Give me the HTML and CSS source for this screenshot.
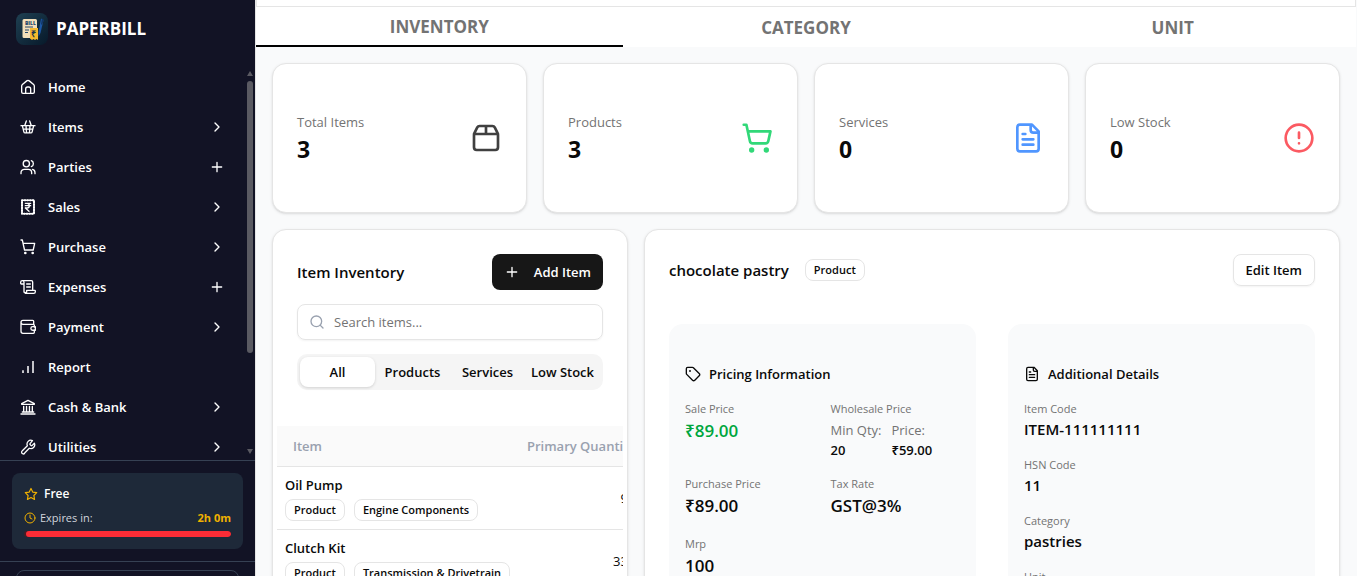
FILE: index.html
```html
<!DOCTYPE html>
<html lang="en">
<head>
<meta charset="utf-8">
<meta name="viewport" content="width=device-width, initial-scale=1">
<title>Paperbill</title>
<link rel="stylesheet" href="styles.css">
</head>
<body>
<svg class="sprite" aria-hidden="true">
  <symbol id="chevron" viewBox="0 0 24 24"><path d="m9 18 6-6-6-6"/></symbol>
  <symbol id="plus" viewBox="0 0 24 24"><path d="M5 12h14M12 5v14"/></symbol>
  <symbol id="home" viewBox="0 0 24 24"><path d="M2.500 10.500a3 3 0 0 1 1.100-2.300l6.500-5.400a3 3 0 0 1 3.800 0l6.500 5.400a3 3 0 0 1 1.100 2.300V19.500a2 2 0 0 1-2 2h-3.500v-6.500a3 3 0 0 0-3-3h-1.500a3 3 0 0 0-3 3v6.500H4.500a2 2 0 0 1-2-2z"/><path d="M8 21.500h8"/></symbol>
  <symbol id="basket" viewBox="0 0 24 24"><path d="M1.500 10h21M3.500 10l2.300 9.200a2 2 0 0 0 2 1.600h8.400a2 2 0 0 0 2-1.600L20.500 10M7 10l2.500-7M17 10l-2.500-7M5 15.300h14M9 10l.8 10.500M15 10l-.8 10.500"/></symbol>
  <symbol id="users" viewBox="0 0 24 24"><circle cx="9.500" cy="7" r="4.700"/><path d="M1.500 22v-1.500a5 5 0 0 1 5-5h6a5 5 0 0 1 5 5V22M17 2.600a4.700 4.700 0 0 1 0 8.800M22.500 22v-1.500a5 5 0 0 0-3.700-4.800"/></symbol>
  <symbol id="receipt" viewBox="0 0 24 24"><path d="M3 2h18v20H3z"/><path class="dots" d="M3 2h18v20H3z"/><path d="M8 6.500h8M8 10h8M8 13.500h2.500a3.500 3.500 0 0 0 0-7M8 13.500l5.500 5"/></symbol>
  <symbol id="cart" viewBox="0 0 24 24"><circle class="fill" cx="8" cy="21" r="1"/><circle class="fill" cx="19" cy="21" r="1"/><path d="M1.500 1.500h2l3.300 15h13l2.200-10H4.700"/></symbol>
  <symbol id="cart-lg" viewBox="0 0 24 24"><circle class="fill" cx="8" cy="21" r="1"/><circle class="fill" cx="19" cy="21" r="1"/><path d="M2.050 2.050h2l2.660 12.420a2 2 0 0 0 2 1.580h9.780a2 2 0 0 0 1.950-1.570l1.650-7.430H5.120"/></symbol>
  <symbol id="scroll" viewBox="0 0 24 24"><path d="M6 17V5a2.500 2.500 0 0 0-5 0v1.500a1 1 0 0 0 1 1h4M3.500 2.500H17a2 2 0 0 1 2 2V17M22.500 17H10v2.500a2.500 2.500 0 0 1-4 0V17M8 21.500h12.500a2.500 2.500 0 0 0 2.500-2.500v-1a1 1 0 0 0-1-1M10 7.500h5.500M10 12h5.500"/></symbol>
  <symbol id="wallet" viewBox="0 0 24 24"><path d="M20.500 8V3.500a1.500 1.500 0 0 0-1.500-1.500H4.500a3 3 0 0 0 0 6H20a1.500 1.500 0 0 1 1.500 1.500V12M1.500 5v13.500a3 3 0 0 0 3 3H20a1.500 1.500 0 0 0 1.500-1.500v-3.500M23 11.500h-4a2.700 2.700 0 0 0 0 5.400h4z"/></symbol>
  <symbol id="bars" viewBox="0 0 24 24"><path d="M4.500 21v-4M12 21v-10.500M19.500 21V3"/></symbol>
  <symbol id="bank" viewBox="0 0 24 24"><path d="M1.500 22.500h21M3.500 19.500h17M2.500 7 12 2l9.500 5v1h-19zM5.500 11v8M9.800 11v8M14.200 11v8M18.500 11v8"/></symbol>
  <symbol id="wrench" viewBox="-1 -1 25 25"><path d="M14.700 6.300a1 1 0 0 0 0 1.400l1.600 1.600a1 1 0 0 0 1.400 0l3.770-3.770a6 6 0 0 1-7.940 7.940l-6.910 6.910a2.120 2.120 0 0 1-5-1 2.120 2.120 0 0 1 1-2l7.910-7.910a6 6 0 0 1 7.940-7.940z"/></symbol>
  <symbol id="star" viewBox="0 0 24 24"><path d="m12 2.500 3 6.200 6.800 1-4.900 4.800 1.200 6.800-6.100-3.200-6.100 3.200 1.200-6.800-4.900-4.800 6.800-1z"/></symbol>
  <symbol id="clock" viewBox="0 0 24 24"><circle cx="12" cy="12" r="10"/><path d="M12 6v6l4 2"/></symbol>
  <symbol id="package" viewBox="0 0 24 24"><path d="M12 3v6M16.760 3a2 2 0 0 1 1.800 1.100l2.230 4.479a2 2 0 0 1 .21.891V19a2 2 0 0 1-2 2H5a2 2 0 0 1-2-2V9.472a2 2 0 0 1 .211-.894L5.450 4.100A2 2 0 0 1 7.240 3zM3.054 9.013h17.893"/></symbol>
  <symbol id="file" viewBox="0 0 24 24"><path d="M15 2H6a2 2 0 0 0-2 2v16a2 2 0 0 0 2 2h12a2 2 0 0 0 2-2V7zM14 2v4a2 2 0 0 0 2 2h4M10 9H8M16 13H8M16 17H8"/></symbol>
  <symbol id="alert" viewBox="0 0 24 24"><circle cx="12" cy="12" r="10"/><path d="M12 8v4M12 16h.01"/></symbol>
  <symbol id="search" viewBox="0 0 24 24"><circle cx="11" cy="11" r="8"/><path d="m21 21-4.300-4.300"/></symbol>
  <symbol id="tag" viewBox="0 0 24 24"><path d="M12.586 2.586A2 2 0 0 0 11.172 2H4a2 2 0 0 0-2 2v7.172a2 2 0 0 0 .586 1.414l8.704 8.704a2.426 2.426 0 0 0 3.420 0l6.580-6.580a2.426 2.426 0 0 0 0-3.420z"/><circle class="fill" cx="7.500" cy="7.500" r=".5"/></symbol>
</svg>

<div class="app">
  <aside class="sidebar">
    <a class="brand" href="#">
      <svg class="logo" viewBox="0 0 32 32" aria-hidden="true">
        <defs><linearGradient id="tile" x1="0" y1="0" x2="1" y2="1"><stop offset="0" stop-color="#1f4052"/><stop offset="1" stop-color="#07192a"/></linearGradient></defs>
        <rect width="32" height="32" rx="8" fill="url(#tile)"/>
        <path d="m25 5.500 2.500 1.500-3 13-2 3.500v-4.500z" fill="#1d57a5"/>
        <path d="M26 5.500 28 7l-2 5-1-1z" fill="#123665"/>
        <path d="M8 6h11.500A1.500 1.500 0 0 1 21 7.500V25H8a1.500 1.500 0 0 1-1.500-1.500v-16A1.500 1.500 0 0 1 8 6z" fill="#f3dfba"/>
        <text x="9" y="12" class="logo-word">BILL</text>
        <path d="M9 14h8M9 17h4M9 19.500h3" stroke="#24476c" stroke-width="1"/>
        <path d="M14 15h8v12l-1.500-1-1.500 1-1.500-1-1.500 1-2-1.500z" fill="#f4b92f"/>
        <text x="15" y="24" class="logo-coin">₹</text>
      </svg>
      <span>PAPERBILL</span>
    </a>
    <div class="nav-wrap">
      <nav class="nav" aria-label="Main">
        <a href="#"><svg class="icon"><use href="#home"/></svg><span>Home</span></a>
        <a href="#"><svg class="icon"><use href="#basket"/></svg><span>Items</span><svg class="icon"><use href="#chevron"/></svg></a>
        <a href="#"><svg class="icon"><use href="#users"/></svg><span>Parties</span><svg class="icon"><use href="#plus"/></svg></a>
        <a href="#"><svg class="icon"><use href="#receipt"/></svg><span>Sales</span><svg class="icon"><use href="#chevron"/></svg></a>
        <a href="#"><svg class="icon"><use href="#cart"/></svg><span>Purchase</span><svg class="icon"><use href="#chevron"/></svg></a>
        <a href="#"><svg class="icon"><use href="#scroll"/></svg><span>Expenses</span><svg class="icon"><use href="#plus"/></svg></a>
        <a href="#"><svg class="icon"><use href="#wallet"/></svg><span>Payment</span><svg class="icon"><use href="#chevron"/></svg></a>
        <a href="#"><svg class="icon muted"><use href="#bars"/></svg><span>Report</span></a>
        <a href="#"><svg class="icon"><use href="#bank"/></svg><span>Cash &amp; Bank</span><svg class="icon"><use href="#chevron"/></svg></a>
        <a href="#"><svg class="icon"><use href="#wrench"/></svg><span>Utilities</span><svg class="icon"><use href="#chevron"/></svg></a>
      </nav>
      <div class="scrollbar" aria-hidden="true"><i class="up"></i><i class="thumb"></i><i class="down"></i></div>
    </div>
    <section class="plan-area">
      <div class="plan">
        <div class="plan-name"><svg class="icon small"><use href="#star"/></svg><span>Free</span></div>
        <div class="plan-time"><svg class="icon tiny"><use href="#clock"/></svg><span>Expires in:</span><strong>2h 0m</strong></div>
        <div class="meter"><span></span></div>
      </div>
    </section>
    <div class="account-area"><button class="account" type="button" aria-label="Account"></button></div>
  </aside>

  <main class="main">
    <div class="topbar"></div>
    <div class="tabs" role="tablist">
      <button class="tab active" role="tab" aria-selected="true" type="button">INVENTORY</button>
      <button class="tab" role="tab" aria-selected="false" type="button">CATEGORY</button>
      <button class="tab" role="tab" aria-selected="false" type="button">UNIT</button>
    </div>
    <div class="content">
      <div class="stats">
        <section class="card stat"><div><p>Total Items</p><strong>3</strong></div><svg class="stat-icon gray"><use href="#package"/></svg></section>
        <section class="card stat"><div><p>Products</p><strong>3</strong></div><svg class="stat-icon green"><use href="#cart-lg"/></svg></section>
        <section class="card stat"><div><p>Services</p><strong>0</strong></div><svg class="stat-icon blue"><use href="#file"/></svg></section>
        <section class="card stat"><div><p>Low Stock</p><strong>0</strong></div><svg class="stat-icon red"><use href="#alert"/></svg></section>
      </div>
      <div class="panels">
        <section class="card list">
          <div class="list-top">
            <div class="list-head">
              <h2>Item Inventory</h2>
              <button class="add" type="button"><svg class="icon"><use href="#plus"/></svg>Add Item</button>
            </div>
            <label class="search"><svg class="icon"><use href="#search"/></svg><input type="text" placeholder="Search items..." aria-label="Search items"></label>
            <div class="filters">
              <button class="on" type="button">All</button>
              <button type="button">Products</button>
              <button type="button">Services</button>
              <button type="button">Low Stock</button>
            </div>
          </div>
          <div class="table-wrap">
            <table>
              <thead><tr><th>Item</th><th class="qty-head">Primary Quantity</th></tr></thead>
              <tbody>
                <tr><td><div class="name">Oil Pump</div><div class="badges"><span class="badge">Product</span><span class="badge">Engine Components</span></div></td><td class="qty">9</td></tr>
                <tr><td><div class="name">Clutch Kit</div><div class="badges"><span class="badge">Product</span><span class="badge">Transmission &amp; Drivetrain</span></div></td><td class="qty">33</td></tr>
              </tbody>
            </table>
          </div>
        </section>
        <section class="card detail">
          <div class="detail-head">
            <h2>chocolate pastry</h2><span class="badge">Product</span>
            <button class="edit" type="button">Edit Item</button>
          </div>
          <div class="info-grid">
            <section class="info">
              <h3><svg class="icon"><use href="#tag"/></svg>Pricing Information</h3>
              <dl class="prices">
                <div><dt>Sale Price</dt><dd class="sale">₹89.00</dd></div>
                <div><dt>Wholesale Price</dt><dd class="bulk"><span>Min Qty:<b>20</b></span><span>Price:<b>₹59.00</b></span></dd></div>
                <div><dt>Purchase Price</dt><dd>₹89.00</dd></div>
                <div><dt>Tax Rate</dt><dd>GST@3%</dd></div>
                <div><dt>Mrp</dt><dd>100</dd></div>
              </dl>
            </section>
            <section class="info">
              <h3><svg class="icon"><use href="#file"/></svg>Additional Details</h3>
              <dl class="facts">
                <div><dt>Item Code</dt><dd>ITEM-111111111</dd></div>
                <div><dt>HSN Code</dt><dd>11</dd></div>
                <div><dt>Category</dt><dd>pastries</dd></div>
                <div><dt>Unit</dt><dd>PCS</dd></div>
              </dl>
            </section>
          </div>
        </section>
      </div>
    </div>
  </main>
</div>
</body>
</html>
```
FILE: styles.css
```css
* { box-sizing: border-box; margin: 0; padding: 0; }
body {
  height: 100vh;
  overflow: hidden;
  font-family: "Open Sans", "Noto Sans", sans-serif;
  font-size: 13px;
  line-height: 20px;
  color: #0a0a0a;
  background: #f9fafb;
}
button, input { font: inherit; color: inherit; border: 0; background: none; }
button { cursor: pointer; }
a { color: inherit; text-decoration: none; }
.sprite { position: absolute; width: 0; height: 0; }
.app { display: flex; height: 100vh; overflow: hidden; }

.icon, .stat-icon {
  flex: none;
  width: 16px;
  height: 16px;
  fill: none;
  stroke: currentColor;
  stroke-width: 2;
  stroke-linecap: round;
  stroke-linejoin: round;
}
.fill { fill: currentColor; }

/* Sidebar */
.sidebar {
  display: flex;
  flex-direction: column;
  flex: none;
  width: 256px;
  height: calc(100vh + 42px);
  color: #fff;
  background: #121325;
  border-right: 1px solid #e5e5e5;
}
.brand {
  display: flex;
  align-items: center;
  gap: 8px;
  flex: none;
  padding: 13px 16px 22px;
  font-size: 17px;
  line-height: 28px;
  font-weight: 700;
}
.logo { width: 32px; height: 32px; }
.logo-word { font: 800 5px "Open Sans", sans-serif; fill: #24476c; }
.logo-coin { font: 700 9px "Open Sans", sans-serif; fill: #17314c; }
.nav-wrap { position: relative; flex: 1 1 0; min-height: 0; overflow: hidden; }
.nav a {
  display: flex;
  align-items: center;
  gap: 12px;
  height: 40px;
  padding: 0 30px 0 20px;
  font-weight: 600;
}
.nav span { flex: 1; }
.nav .muted { color: #c4c4ca; stroke-width: 3; stroke-linecap: butt; }
.dots { stroke-dasharray: 1 3; stroke-width: 3; }
.scrollbar {
  position: absolute;
  top: 4px;
  right: 2px;
  bottom: 6px;
  display: flex;
  flex-direction: column;
  align-items: center;
  width: 6px;
}
.up, .down { border: solid transparent; border-width: 0 3px; }
.up { border-bottom: 5px solid #5a5a62; }
.down { border-top: 5px solid #5a5a62; margin-top: auto; }
.thumb { width: 6px; height: 71%; margin-top: 5px; border-radius: 3px; background: #5a5a62; }
.plan-area { padding: 12px; border-top: 1px solid #364153; }
.plan { padding: 11px 12px 12px; border-radius: 8px; background: #1e2939; }
.plan-name, .plan-time { display: flex; align-items: center; }
.plan-name { gap: 6px; font-size: 12px; font-weight: 600; }
.plan-name .icon, .plan-time .icon { color: #f0b100; }
.plan-name .small { width: 14px; height: 14px; }
.plan-time { gap: 4px; margin-top: 4px; font-size: 11px; color: #d1d5dc; }
.plan-time .tiny { width: 12px; height: 12px; }
.plan-time strong { margin-left: auto; font-weight: 700; color: #f0b100; }
.meter { height: 6px; margin-top: 3px; overflow: hidden; border-radius: 3px; background: #4a1c24; }
.meter span { display: block; width: 99%; height: 100%; margin-left: auto; border-radius: 3px; background: #fb2c36; }
.account-area { padding: 8px 16px; border-top: 1px solid #364153; }
.account { display: block; width: 100%; height: 40px; border: 1px solid #364153; border-radius: 8px; }

/* Main column */
.main { flex: 1; min-width: 0; height: 100vh; overflow: hidden; margin-right: 1px; }
.topbar { height: 7px; border: 1px solid #e5e5e5; border-top: 0; background: #fff; }
.tabs { display: grid; grid-template-columns: repeat(3, 1fr); height: 40px; background: #fff; }
.tab { padding-top: 2px; font-size: 17px; line-height: 28px; font-weight: 700; color: #737373; }
.tab.active { border-bottom: 2px solid #000; }
.content { padding: 16px; }
.card {
  border: 1px solid #e5e5e5;
  border-radius: 14px;
  background: #fff;
  box-shadow: 0 1px 3px rgba(0, 0, 0, .1), 0 1px 2px -1px rgba(0, 0, 0, .1);
}
.stats { display: grid; grid-template-columns: repeat(4, 1fr); gap: 16px; }
.stat { display: flex; align-items: center; justify-content: space-between; padding: 48px 24px; }
.stat p { color: #737373; }
.stat strong { display: block; padding-top: 2px; font-size: 23px; line-height: 30px; font-weight: 700; }
.stat-icon { width: 32px; height: 32px; }
.gray { color: #404040; }
.green { color: #31d878; }
.blue { color: #5096ff; }
.red { color: #fb5a62; }

.panels { display: flex; gap: 16px; margin-top: 16px; }
h2 { font-size: 15px; line-height: 24px; font-weight: 600; }
.badge {
  padding: 2px 8px;
  border: 1px solid #e5e5e5;
  border-radius: 8px;
  font-size: 11px;
  line-height: 16px;
  font-weight: 600;
  white-space: nowrap;
}

/* Item list */
.list { flex: none; width: 33.333%; }
.list-top { display: grid; gap: 14px; padding: 24px; }
.list-head { display: flex; align-items: center; justify-content: space-between; }
.add {
  display: flex;
  align-items: center;
  gap: 14px;
  height: 36px;
  padding: 0 12px;
  border-radius: 8px;
  font-weight: 600;
  color: #fff;
  background: #171717;
}
.search {
  display: flex;
  align-items: center;
  gap: 9px;
  height: 36px;
  padding: 0 11px;
  border: 1px solid #e5e5e5;
  border-radius: 8px;
  box-shadow: 0 1px 2px rgba(0, 0, 0, .05);
}
.search .icon { color: #99a1af; }
.search input { flex: 1; min-width: 0; outline: 0; }
.search input::placeholder { color: #737373; opacity: 1; }
.filters {
  display: grid;
  grid-template-columns: repeat(4, 1fr);
  height: 36px;
  padding: 3px;
  border-radius: 10px;
  background: #f5f5f5;
}
.filters button { border-radius: 8px; font-weight: 600; white-space: nowrap; }
.filters .on { background: #fff; box-shadow: 0 1px 3px rgba(0, 0, 0, .15); }
.table-wrap { margin: 12px 4px 0; overflow: hidden; }
table { width: calc(100% + 5px); table-layout: fixed; border-collapse: collapse; }
th {
  height: 40px;
  padding: 0 16px;
  font-weight: 600;
  text-align: left;
  white-space: nowrap;
  color: #99a1af;
  background: #fafafa;
}
.qty-head { width: 117px; }
tr { border-bottom: 1px solid #e5e5e5; }
td { padding: 8px; white-space: nowrap; }
.name { font-weight: 600; }
.badges { display: flex; gap: 9px; margin-top: 4px; }
.qty { padding-right: 0; text-align: right; }

/* Item detail */
.detail { flex: 1; min-width: 0; padding: 24px; }
.detail-head { display: flex; align-items: center; gap: 16px; }
.edit {
  height: 32px;
  margin-left: auto;
  padding: 0 12px;
  border: 1px solid #e5e5e5;
  border-radius: 8px;
  font-weight: 600;
  box-shadow: 0 1px 2px rgba(0, 0, 0, .05);
}
.info-grid { display: grid; grid-template-columns: 1fr 1fr; gap: 32px; margin-top: 38px; }
.info { padding: 40px 16px; border-radius: 14px; background: #f9fafb; }
h3 { display: flex; align-items: center; gap: 8px; font-size: 13px; line-height: 20px; font-weight: 600; }
dl { display: grid; gap: 16px; margin-top: 17px; }
.prices { grid-template-columns: 1fr 1fr; }
dt { font-size: 11px; line-height: 16px; color: #737373; }
dd { font-size: 17px; line-height: 28px; font-weight: 600; }
.facts dd { font-size: 15px; line-height: 24px; }
dd.sale { color: #00a63e; }
dd.bulk { display: flex; gap: 10px; padding-top: 3px; font-size: 13px; line-height: 20px; font-weight: 400; color: #737373; white-space: nowrap; }
.bulk b { display: block; font-weight: 600; color: #0a0a0a; }
```
